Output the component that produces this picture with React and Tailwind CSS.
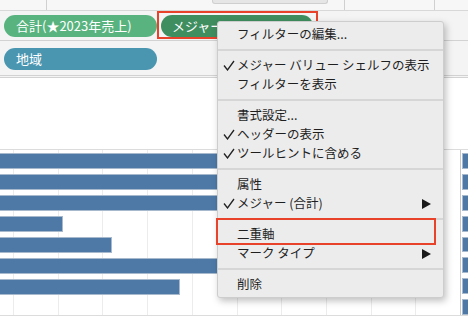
import React from 'react';

const Check = () => (
  <svg width="12" height="11" viewBox="0 0 12 11" className="block">
    <polyline points="1,5.5 4.5,10 11,1" fill="none" stroke="#222" strokeWidth="1.3" />
  </svg>
);

const Arrow = () => (
  <svg width="9" height="10" viewBox="0 0 9 10" className="block">
    <polygon points="0,0 9,5 0,10" fill="#1a1a1a" />
  </svg>
);

const Item = ({ label, checked, sub }) => (
  <div className="flex items-center h-[19px] text-[12.5px] text-[#1f1f1f] leading-none">
    <div className="w-[19px] flex justify-center pl-[2px]">{checked && <Check />}</div>
    <span className="flex-1">{label}</span>
    {sub && (
      <div className="pr-[12px]">
        <Arrow />
      </div>
    )}
  </div>
);

const Sep = () => <div className="h-[2px] bg-[#d6d6d6] my-[5px]" />;

const leftBars = [430, 430, 430, 63, 112, 430, 180];
const rightBars = [0, 1, 2, 3, 4, 5, 6, 7];

export default function App() {
  return (
    <div className="relative w-[468px] h-[320px] overflow-hidden bg-white font-['Noto_Sans_CJK_JP',sans-serif]">
      {/* top strip */}
      <div className="flex h-[11px] bg-[#f7f7f7] border-b border-[#d8d8d8]">
        <div className="w-[47px] border-r border-[#d0d0d0]" />
        <div className="w-[165px]" />
        <div className="w-[116px] h-[4px] bg-[#e6e6e6] border border-t-0 border-[#cfcfcf] rounded-b-[3px]" />
        <div className="w-[17px] border-r border-[#d0d0d0]" />
        <div className="w-[90px] border-r border-[#d0d0d0]" />
      </div>

      {/* shelf 1 */}
      <div className="flex items-center gap-[4px] h-[30px] pl-[4px] bg-[#f4f4f4] border-b border-[#d2d2d2]">
        <div className="w-[153px] h-[22px] rounded-full bg-[#59b37f] text-white text-[13px] flex items-center pl-[12px] whitespace-nowrap">
          合計(★2023年売上)
        </div>
        <div className="w-[152px] h-[22px] rounded-full bg-[#3f8e5f] text-white text-[13px] flex items-center pl-[11px] whitespace-nowrap">
          メジャー バリュー
        </div>
      </div>

      {/* shelf 2 */}
      <div className="h-[37px] pl-[4px] pt-[7px] bg-[#f4f4f4] border-b-[3px] border-double border-[#d2d2d2]">
        <div className="w-[153px] h-[22px] rounded-full bg-[#4a96b1] text-white text-[13px] flex items-center pl-[12px]">
          地域
        </div>
      </div>

      <div className="h-[71px]" />

      {/* chart */}
      <div className="flex h-[167px] border-t border-b border-[#dcdcdc]">
        <div className="relative w-[460px]">
          <div className="absolute inset-0 flex pl-[13px]">
            {Array.from({ length: 10 }).map((_, i) => (
              <div key={i} className="w-[47px] border-l border-[#ececec]" />
            ))}
          </div>
          <div className="relative flex flex-col gap-[5px] pt-[3px]">
            {leftBars.map((w, i) => (
              <div
                key={i}
                className="h-[16px] bg-[#4e79a7] border border-[#a7b9cc] border-l-0"
                style={{ width: w }}
              />
            ))}
          </div>
        </div>
        <div className="flex-1 border-l border-[#c8c8c8] pl-[1px] pt-[3px] flex flex-col gap-[5px]">
          {rightBars.map((i) => (
            <div key={i} className="h-[16px] bg-[#4e79a7] border border-[#a7b9cc] border-r-0" />
          ))}
        </div>
      </div>

      {/* highlight on pill */}
      <div className="absolute left-[157px] top-[11px] w-[161px] h-[28px] border-2 border-[#e8422b]" />

      {/* context menu */}
      <div className="absolute left-[217px] top-[21px] w-[227px] bg-[#ececec] border border-[#cdcdcd] rounded-[3px] shadow-[2px_3px_7px_rgba(0,0,0,0.25)] pt-[3px] pb-[3px]">
        <Item label="フィルターの編集..." />
        <Sep />
        <Item label="メジャー バリュー シェルフの表示" checked />
        <Item label="フィルターを表示" />
        <Sep />
        <Item label="書式設定..." />
        <Item label="ヘッダーの表示" checked />
        <Item label="ツールヒントに含める" checked />
        <Sep />
        <Item label="属性" />
        <Item label="メジャー (合計)" checked sub />
        <Sep />
        <Item label="二重軸" />
        <Item label="マーク タイプ" sub />
        <Sep />
        <Item label="削除" />
      </div>

      {/* highlight on menu item */}
      <div className="absolute left-[216px] top-[218px] w-[220px] h-[27px] border-2 border-[#e8422b]" />
    </div>
  );
}
